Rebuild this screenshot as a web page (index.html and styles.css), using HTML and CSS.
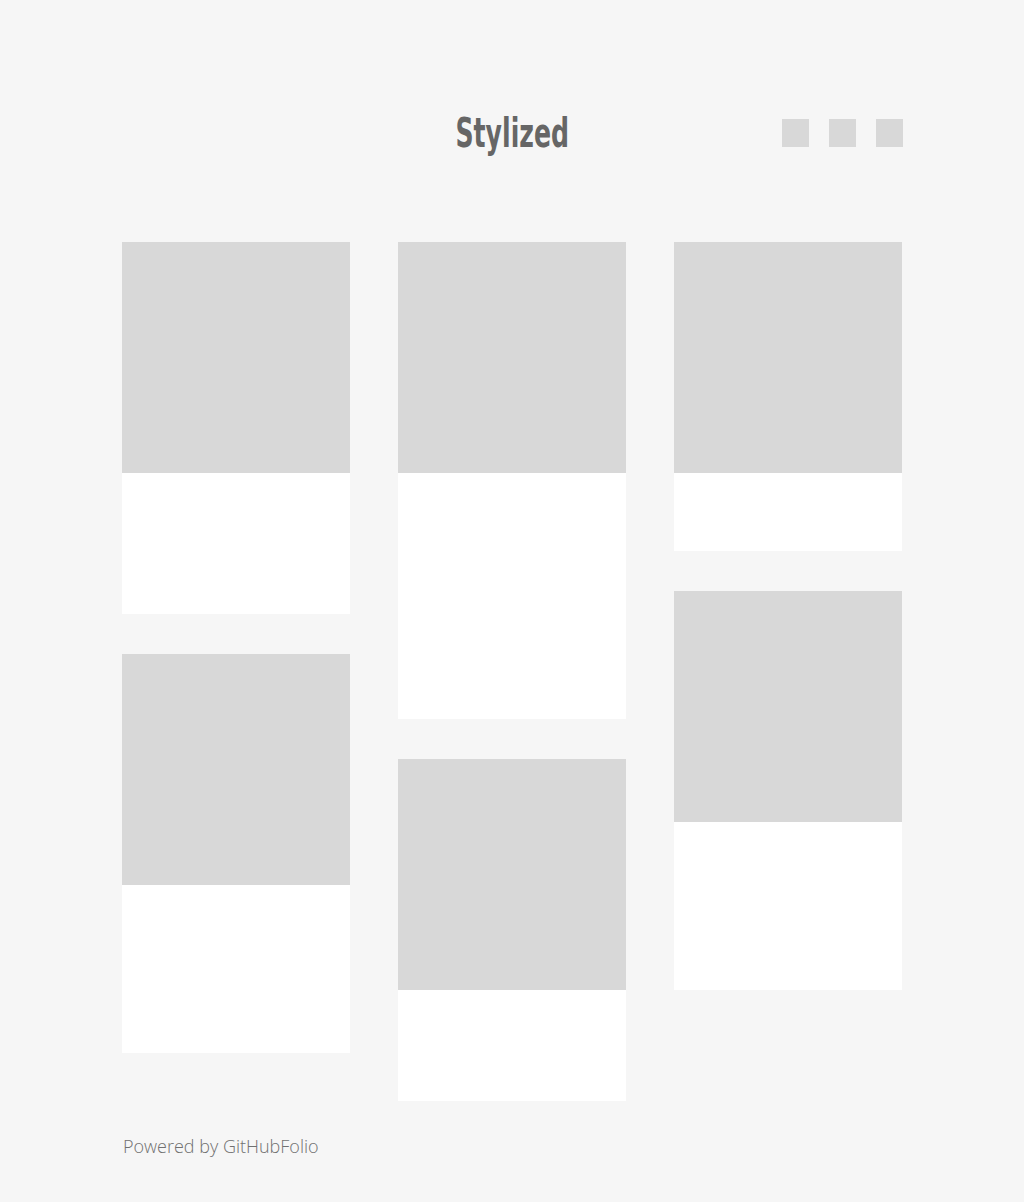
FILE: index.html
```html
<!DOCTYPE html>
<html lang="en">
<head>
    <meta charset="UTF-8">
    <meta name="viewport" content="width=device-width, initial-scale=1.0">
    <title>Stylized</title>
    <link rel="stylesheet" href="styles.css">
</head>
<body>
    <div class="page">
        <header class="header">
            <div></div>
            <h1 class="title">Stylized</h1>
            <div class="socials">
                <span class="social"></span>
                <span class="social"></span>
                <span class="social"></span>
            </div>
        </header>

        <div class="grid">
            <div class="column">
                <div class="card"><div class="card-image"></div><div class="card-body body-141"></div></div>
                <div class="card"><div class="card-image"></div><div class="card-body body-168"></div></div>
            </div>
            <div class="column">
                <div class="card"><div class="card-image"></div><div class="card-body body-246"></div></div>
                <div class="card"><div class="card-image"></div><div class="card-body body-111"></div></div>
            </div>
            <div class="column">
                <div class="card"><div class="card-image"></div><div class="card-body body-78"></div></div>
                <div class="card"><div class="card-image"></div><div class="card-body body-168"></div></div>
            </div>
        </div>

        <footer class="footer">Powered by GitHubFolio</footer>
    </div>
</body>
</html>
```

FILE: styles.css
```css
html, body {
    margin: 0;
    background-color: #f6f6f6;
}
body {
    min-height: 1202px;
}
.page {
    width: 780px;
    margin: 0 auto;
    padding-top: 119px;
}
.header {
    display: grid;
    grid-template-columns: 1fr auto 1fr;
    align-items: center;
    height: 28px;
}
.title {
    margin: 0;
    font-family: "DejaVu Sans", sans-serif;
    font-weight: bold;
    font-size: 40px;
    line-height: 28px;
    color: #666;
    transform: scaleX(0.63);
}
.socials {
    display: flex;
    justify-content: flex-end;
    gap: 20px;
    margin-right: -1px;
}
.social {
    width: 27px;
    height: 28px;
    background-color: #d8d8d8;
}
.grid {
    display: flex;
    gap: 48px;
    margin-top: 95px;
}
.column {
    width: 228px;
    display: flex;
    flex-direction: column;
    gap: 40px;
}
.card-image {
    height: 231px;
    background-color: #d8d8d8;
}
.card-body {
    background-color: #fff;
}
.body-78 { height: 78px; }
.body-111 { height: 111px; }
.body-141 { height: 141px; }
.body-168 { height: 168px; }
.body-246 { height: 246px; }
.footer {
    margin-top: 33px;
    padding-left: 1px;
    font-family: "Open Sans", sans-serif;
    font-weight: 300;
    font-size: 18px;
    line-height: 24px;
    color: #707070;
}
```
